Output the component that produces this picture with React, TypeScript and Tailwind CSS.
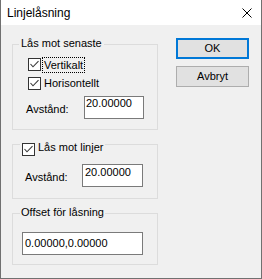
import React from "react";

function Check() {
  return (
    <span className="w-[13px] h-[13px] shrink-0 border border-[#333333] bg-white flex">
      <svg width="11" height="11" viewBox="0 0 11 11">
        <polyline points="1.5,5 4,7.8 9.5,2.2" fill="none" stroke="#3a3a3a" strokeWidth="1.1" />
      </svg>
    </span>
  );
}

export default function App() {
  return (
    <div className="w-[262px] h-[279px] flex flex-col bg-[#f0f0f0] border-x border-b border-[#707070] font-['Liberation_Sans',Arial,sans-serif] text-[11px] leading-[13px] text-black">
      <div className="h-[25px] shrink-0 bg-white flex items-center justify-between pl-[6px] pr-[9px]">
        <span className="text-[12px] leading-[14px] pt-[1px]">Linjelåsning</span>
        <svg width="10" height="10" viewBox="0 0 10 10">
          <path d="M0.5 0.5 L9.5 9.5 M9.5 0.5 L0.5 9.5" stroke="#000" strokeWidth="1" fill="none" />
        </svg>
      </div>
      <div className="flex items-start pl-[11px]">
        <div className="w-[146px] flex flex-col pt-[19px] gap-[14px]">
          {/* Group 1 */}
          <div className="relative h-[86px] border border-[#dcdcdc] flex flex-col">
            <span className="absolute left-[6px] top-[-8px] px-[2px] bg-[#f0f0f0]">Lås mot senaste</span>
            <div className="mt-[13px] pl-[15px] h-[13px] flex items-center">
              <Check />
              <span className="ml-[1px] h-[16px] px-[1px] border border-dotted border-black leading-[14px]">Vertikalt</span>
            </div>
            <div className="mt-[6px] pl-[15px] h-[13px] flex items-center">
              <Check />
              <span className="ml-[3px]">Horisontellt</span>
            </div>
            <div className="mt-[6px] pl-[13px] flex items-start">
              <span className="w-[58px] mt-[7px]">Avstånd:</span>
              <div className="w-[60px] h-[23px] border border-[#7a7a7a] bg-white pl-[1px]">20.00000</div>
            </div>
          </div>
          {/* Group 2 */}
          <div className="relative h-[55px] border border-[#dcdcdc] flex flex-col">
            <div className="absolute left-[7px] top-[-2px] pl-[2px] pr-[2px] bg-[#f0f0f0] flex items-start">
              <Check />
              <span className="ml-[3px] -mt-[2px]">Lås mot linjer</span>
            </div>
            <div className="mt-[19px] pl-[12px] flex items-start">
              <span className="w-[57px] mt-[7px]">Avstånd:</span>
              <div className="w-[61px] h-[23px] border border-[#7a7a7a] bg-white pl-[2px] pt-[1px]">20.00000</div>
            </div>
          </div>
          {/* Group 3 */}
          <div className="relative h-[52px] border border-[#dcdcdc] flex flex-col">
            <span className="absolute left-[7px] top-[-8px] px-[1px] bg-[#f0f0f0]">Offset för låsning</span>
            <div className="mt-[18px] pl-[9px]">
              <div className="w-[121px] h-[23px] border border-[#7a7a7a] bg-white pl-[2px] flex items-center">0.00000,0.00000</div>
            </div>
          </div>
        </div>
        <div className="ml-[18px] pt-[13px] flex flex-col gap-[7px]">
          <button className="w-[73px] h-[21px] border-2 border-[#0078d7] bg-[#e1e1e1] flex items-center justify-center">OK</button>
          <button className="w-[73px] h-[21px] border border-[#adadad] bg-[#e1e1e1] flex items-center justify-center">Avbryt</button>
        </div>
      </div>
    </div>
  );
}
